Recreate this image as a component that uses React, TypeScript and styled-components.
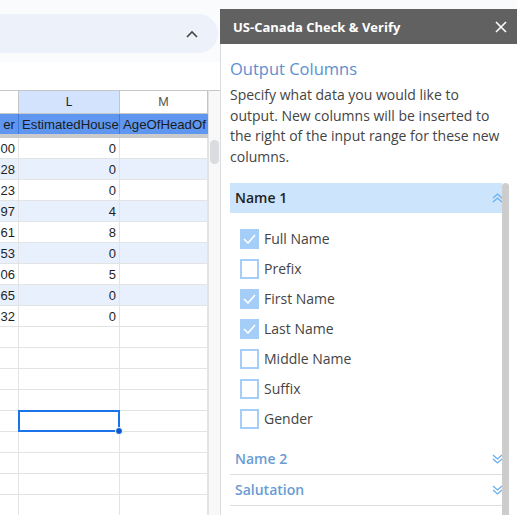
import React from "react";
import styled, { createGlobalStyle } from "styled-components";

const Global = createGlobalStyle`
  html, body { margin: 0; padding: 0; background: #f9fbfd; overflow: hidden; }
  * { box-sizing: border-box; }
`;

const Page = styled.div`
  width: 517px;
  height: 515px;
  display: flex;
  overflow: hidden;
`;

/* ---------- Sheet side ---------- */
const SheetSide = styled.div`
  width: 220px;
  flex: none;
  display: flex;
  flex-direction: column;
  overflow: hidden;
`;

const TopArea = styled.div`
  height: 62px;
  flex: none;
  background: #f9fbfd;
  padding-top: 14px;
`;

const Pill = styled.div`
  height: 39px;
  width: 238px;
  margin-left: -20px;
  background: #edf2fa;
  border-radius: 20px;
  display: flex;
  align-items: center;
  justify-content: flex-end;
  padding-right: 20px;
  color: #444746;
`;

const FormulaGap = styled.div`
  height: 28px;
  flex: none;
  background: #fff;
`;

const SheetBody = styled.div`
  flex: 1;
  display: flex;
  background: #fff;
  min-height: 0;
`;

const Cells = styled.div`
  width: 208px;
  flex: none;
  display: flex;
  flex-direction: column;
`;

const Row = styled.div<{ $h: number; $bg?: string }>`
  display: grid;
  grid-template-columns: 19px 101px 88px;
  height: ${(p) => p.$h}px;
  flex: none;
  background: ${(p) => p.$bg || "#fff"};
`;

const HeadCell = styled.div<{ $sel?: boolean }>`
  border-top: 1px solid #c4c7c5;
  border-right: 1px solid #c4c7c5;
  border-bottom: 1px solid #c4c7c5;
  background: ${(p) => (p.$sel ? "#d3e3fd" : "#fff")};
  color: ${(p) => (p.$sel ? "#1f1f1f" : "#5f5a50")};
  font: 12px Roboto, "Liberation Sans", sans-serif;
  display: flex;
  align-items: center;
  justify-content: center;
`;

const Cell = styled.div`
  position: relative;
  border-right: 1px solid #e2e3e3;
  border-bottom: 1px solid #e2e3e3;
  font: 13px "Liberation Sans", Arial, sans-serif;
  color: #1f1f1f;
  display: flex;
  align-items: center;
  justify-content: flex-end;
  padding: 0 3px 0 0;
  white-space: nowrap;
`;

const HdrCell = styled.div<{ $last?: boolean }>`
  border-right: ${(p) => (p.$last ? "none" : "1px solid #3f7ad6")};
  font: 13.2px "Liberation Sans", Arial, sans-serif;
  color: #1b1b1b;
  display: flex;
  align-items: center;
  justify-content: ${(p) => (p.$last === undefined ? "flex-end" : "flex-start")};
  padding: 0 3px;
  overflow: hidden;
  white-space: nowrap;
`;

const Freeze = styled.div`
  height: 4px;
  flex: none;
  background: #c9cbcd;
`;

const Selection = styled.div`
  position: absolute;
  left: -1px;
  top: -1px;
  right: -1px;
  bottom: -1px;
  border: 2px solid #1a73e8;
  pointer-events: none;
  z-index: 1;
`;

const Handle = styled.div`
  position: absolute;
  right: -4px;
  bottom: -4px;
  width: 8px;
  height: 8px;
  border-radius: 50%;
  background: #0b57d0;
  border: 1px solid #fff;
  z-index: 2;
`;

const VTrack = styled.div`
  width: 12px;
  flex: none;
  background: #f8f8f8;
  border-left: 1px solid #e2e3e3;
  border-top: 1px solid #c4c7c5;
  padding: 49px 1px 0 1px;
`;

const VThumb = styled.div`
  height: 24px;
  border-radius: 5px;
  background: #dadce0;
`;

/* ---------- Panel ---------- */
const PanelSide = styled.div`
  flex: 1;
  display: flex;
  flex-direction: column;
  padding-top: 9px;
  background: #f9fbfd;
  min-width: 0;
`;

const PanelHead = styled.div`
  height: 35px;
  flex: none;
  background: #616161;
  display: flex;
  align-items: center;
  justify-content: space-between;
  padding: 0 9px 0 13px;
  color: #fff;
  font: 700 13px "Open Sans", "Noto Sans", sans-serif;
`;

const CloseBtn = styled.div`
  width: 14px;
  height: 14px;
  display: flex;
  align-items: center;
  justify-content: center;
`;

const PanelBody = styled.div`
  flex: 1;
  background: #fff;
  border-left: 1px solid #dadce0;
  padding: 13px 8px 0 9px;
  display: flex;
  flex-direction: column;
  min-height: 0;
`;

const Title = styled.div`
  font: 400 16.5px/24px "Open Sans", "Noto Sans", sans-serif;
  color: #5b8fd0;
`;

const Desc = styled.div`
  margin-top: 4px;
  font: 400 14px/20.7px "Open Sans", "Noto Sans", sans-serif;
  color: #444;
  padding-right: 2px;
`;

const ListWrap = styled.div`
  margin-top: 15px;
  flex: 1;
  display: flex;
  min-height: 0;
`;

const List = styled.div`
  flex: 1;
  min-width: 0;
`;

const Scroll = styled.div`
  width: 7px;
  flex: none;
  background: #cdcdcd;
  border-radius: 4px 4px 0 0;
`;

const SectionHead = styled.div<{ $open?: boolean }>`
  height: ${(p) => (p.$open ? 30 : 31)}px;
  display: flex;
  align-items: center;
  justify-content: space-between;
  padding: 0 0 0 5px;
  background: ${(p) => (p.$open ? "#cce4fc" : "#fff")};
  border-bottom: ${(p) => (p.$open ? "none" : "1px solid #dedede")};
  font: 600 14px "Open Sans", "Noto Sans", sans-serif;
  color: ${(p) => (p.$open ? "#1f1f1f" : "#6a9bd4")};
`;

const Checks = styled.div`
  padding: 11px 0 10px 10px;
`;

const CheckRow = styled.div`
  height: 30px;
  display: flex;
  align-items: center;
  gap: 5px;
  font: 400 14px "Open Sans", "Noto Sans", sans-serif;
  color: #444;
`;

const Box = styled.div<{ $on?: boolean }>`
  width: 19px;
  height: 20px;
  flex: none;
  background: ${(p) => (p.$on ? "#a4cdf8" : "#fff")};
  border: 2px solid #a4cdf8;
  display: flex;
  align-items: center;
  justify-content: center;
`;

const Chev = ({ up }: { up?: boolean }) => (
  <svg width="11" height="10" viewBox="0 0 11 10" style={{ marginRight: -1 }}>
    <g fill="none" stroke="#68b0f2" strokeWidth="1.3">
      {up ? (
        <>
          <polyline points="1,5 5.5,1 10,5" />
          <polyline points="1,9 5.5,5 10,9" />
        </>
      ) : (
        <>
          <polyline points="1,1 5.5,5 10,1" />
          <polyline points="1,5 5.5,9 10,5" />
        </>
      )}
    </g>
  </svg>
);

const Tick = () => (
  <svg width="15" height="15" viewBox="0 0 15 15">
    <polyline points="2,8 6,12 13,4" fill="none" stroke="#fff" strokeWidth="1.6" />
  </svg>
);

const dataRows: [string, string][] = [
  ["00", "0"],
  ["28", "0"],
  ["23", "0"],
  ["97", "4"],
  ["61", "8"],
  ["53", "0"],
  ["06", "5"],
  ["65", "0"],
  ["32", "0"],
];

const checks: [string, boolean][] = [
  ["Full Name", true],
  ["Prefix", false],
  ["First Name", true],
  ["Last Name", true],
  ["Middle Name", false],
  ["Suffix", false],
  ["Gender", false],
];

export default function App() {
  const rows = Array.from({ length: 18 }, (_, i) => i);
  return (
    <>
      <Global />
      <Page>
        <SheetSide>
          <TopArea>
            <Pill>
              <svg width="12" height="8" viewBox="0 0 12 8">
                <polyline points="1,7 6,2 11,7" fill="none" stroke="#444746" strokeWidth="1.6" />
              </svg>
            </Pill>
          </TopArea>
          <FormulaGap />
          <SheetBody>
            <Cells>
              <Row $h={24}>
                <HeadCell />
                <HeadCell $sel>L</HeadCell>
                <HeadCell>M</HeadCell>
              </Row>
              <Row $h={20} $bg="#5f97f0">
                <HdrCell>er</HdrCell>
                <HdrCell $last={false}>EstimatedHouse</HdrCell>
                <HdrCell $last>AgeOfHeadOf</HdrCell>
              </Row>
              <Freeze />
              {rows.map((i) => {
                const d = dataRows[i];
                const bg = d && i % 2 === 1 ? "#e8f0fe" : "#fff";
                return (
                  <Row key={i} $h={21} $bg={bg}>
                    <Cell>{d ? d[0] : ""}</Cell>
                    <Cell>
                      {d ? d[1] : ""}
                      {i === 13 && (
                        <>
                          <Selection />
                          <Handle />
                        </>
                      )}
                    </Cell>
                    <Cell />
                  </Row>
                );
              })}
            </Cells>
            <VTrack>
              <VThumb />
            </VTrack>
          </SheetBody>
        </SheetSide>
        <PanelSide>
          <PanelHead>
            <span>US-Canada Check &amp; Verify</span>
            <CloseBtn>
              <svg width="12" height="12" viewBox="0 0 12 12">
                <g stroke="#fff" strokeWidth="1.6">
                  <line x1="1" y1="1" x2="11" y2="11" />
                  <line x1="11" y1="1" x2="1" y2="11" />
                </g>
              </svg>
            </CloseBtn>
          </PanelHead>
          <PanelBody>
            <Title>Output Columns</Title>
            <Desc>
              Specify what data you would like to output. New columns will be inserted to the right of the input
              range for these new columns.
            </Desc>
            <ListWrap>
              <List>
                <SectionHead $open>
                  <span>Name 1</span>
                  <Chev up />
                </SectionHead>
                <Checks>
                  {checks.map(([label, on]) => (
                    <CheckRow key={label}>
                      <Box $on={on}>{on && <Tick />}</Box>
                      <span>{label}</span>
                    </CheckRow>
                  ))}
                </Checks>
                <SectionHead>
                  <span>Name 2</span>
                  <Chev />
                </SectionHead>
                <SectionHead>
                  <span>Salutation</span>
                  <Chev />
                </SectionHead>
              </List>
              <Scroll />
            </ListWrap>
          </PanelBody>
        </PanelSide>
      </Page>
    </>
  );
}
